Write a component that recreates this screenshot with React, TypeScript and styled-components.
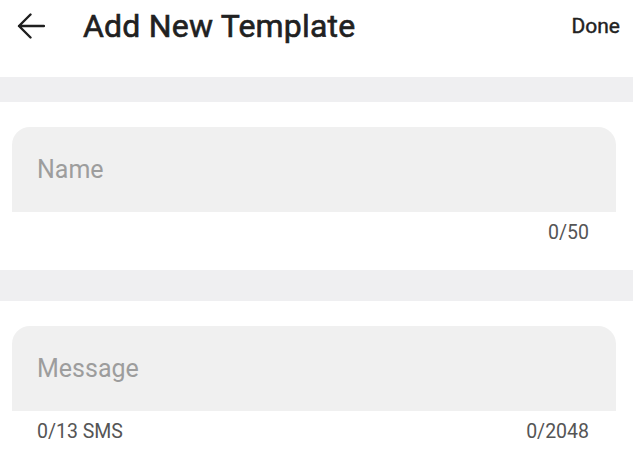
import styled, { createGlobalStyle } from "styled-components";

const GlobalStyle = createGlobalStyle`
  html, body {
    margin: 0;
    padding: 0;
    background: #ffffff;
  }
  body {
    font-family: Roboto, "Liberation Sans", sans-serif;
    -webkit-font-smoothing: antialiased;
  }
`;

const Page = styled.div`
  width: 633px;
  display: flex;
  flex-direction: column;
`;

const Header = styled.header`
  height: 52px;
  display: flex;
  align-items: center;
  padding: 0 13px 0 17px;
  margin-bottom: 25px;
`;

const BackButton = styled.button`
  border: none;
  background: none;
  padding: 0;
  width: 26px;
  height: 26px;
  display: grid;
  place-items: center;
  color: #1f1f1f;
  cursor: pointer;
`;

// medium weight: installed Roboto only has regular/bold, so thicken the regular face
const Title = styled.h1`
  flex: 1;
  margin: 0 0 0 40px;
  font-size: 32px;
  font-weight: 400;
  -webkit-text-stroke: 0.6px #212121;
  color: #212121;
  letter-spacing: 0.2px;
`;

const DoneButton = styled.button`
  border: none;
  background: none;
  padding: 0;
  font-family: inherit;
  font-size: 21px;
  font-weight: 400;
  -webkit-text-stroke: 0.4px #222222;
  color: #222222;
  cursor: pointer;
`;

const Divider = styled.div<{ $h: number }>`
  height: ${(p) => p.$h}px;
  background: #efeff1;
`;

const Section = styled.section`
  display: flex;
  flex-direction: column;
  padding: 25px 17px 0 12px;
`;

const Field = styled.input`
  height: 85px;
  box-sizing: border-box;
  border: none;
  outline: none;
  border-radius: 18px 18px 0 0;
  background: #f0f0f0;
  padding: 0 25px;
  font-family: inherit;
  font-size: 25px;
  color: #222;
  &::placeholder {
    color: #9d9d9d;
  }
`;

const Counters = styled.div<{ $single?: boolean }>`
  display: flex;
  justify-content: ${(p) => (p.$single ? "flex-end" : "space-between")};
  padding: 9px 27px 0 25px;
  height: 24px;
  margin-bottom: 25px;
  font-size: 19.5px;
  line-height: 24px;
  color: #555555;
`;

const BackArrow = () => (
  <svg width="28" height="26" viewBox="0 0 28 26" fill="none">
    <path
      d="M27 13H2M13.5 1.5L2 13l11.5 11.5"
      stroke="currentColor"
      strokeWidth="2.4"
      strokeLinecap="round"
      strokeLinejoin="round"
    />
  </svg>
);

export default function App() {
  return (
    <Page>
      <GlobalStyle />
      <Header>
        <BackButton aria-label="Back">
          <BackArrow />
        </BackButton>
        <Title>Add New Template</Title>
        <DoneButton>Done</DoneButton>
      </Header>
      <Divider $h={25} />
      <Section>
        <Field placeholder="Name" />
        <Counters $single>
          <span>0/50</span>
        </Counters>
      </Section>
      <Divider $h={31} />
      <Section>
        <Field placeholder="Message" />
        <Counters>
          <span>0/13 SMS</span>
          <span>0/2048</span>
        </Counters>
      </Section>
    </Page>
  );
}
